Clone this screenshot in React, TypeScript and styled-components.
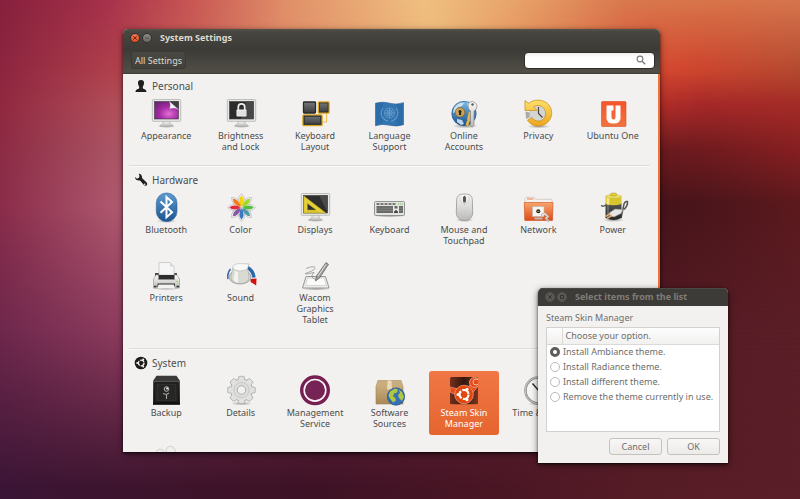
import React from "react";
import styled, { createGlobalStyle, css } from "styled-components";

const GlobalStyle = createGlobalStyle`
  *, *::before, *::after { box-sizing: border-box; }
  html, body { margin: 0; height: 100%; }
  body {
    font-family: "Noto Sans", "Open Sans", sans-serif;
    font-size: 9px;
    line-height: 11px;
    color: #4c4c4c;
    overflow: hidden;
  }
  button, input { font: inherit; color: inherit; margin: 0; }
`;

/* ---------- desktop ---------- */

const Desktop = styled.main`
  position: relative;
  height: 100vh;
  min-height: 480px;
  overflow: hidden;
  background: linear-gradient(90deg, #3b1536 0%, #3d142c 20%, #3e1225 40%, #4a1624 62%, #561c26 80%, #5a1e28 100%);
`;

const WallpaperBand = styled.div<{ $from: number; $to: number; $stops: string }>`
  position: absolute;
  inset: 0;
  background: linear-gradient(90deg, ${(p) => p.$stops});
  mask-image: linear-gradient(180deg, #000 ${(p) => p.$from}%, transparent ${(p) => p.$to}%);
`;

const bands = [
  { from: 66, to: 98, stops: "#6e284c 0%, #8e3c5e 15%, #7a2c4c 40%, #551b24 84%, #5a1e27 100%" },
  { from: 41, to: 66, stops: "#8a2c4a 0%, #b05a70 15%, #a04048 50%, #46141a 83%, #4c161b 90%, #5c191d 100%" },
  { from: 30, to: 41, stops: "#8c2b44 0%, #ac5666 15%, #c06050 50%, #6c1a1e 83%, #701b1f 88%, #861f21 100%" },
  { from: 21, to: 30, stops: "#902840 0%, #b2505a 15%, #d07050 50%, #b02c28 83%, #a42828 88%, #a42b27 100%" },
  { from: 14, to: 21, stops: "#8c2540 0%, #b2424c 15%, #e08a68 35%, #eeb878 55%, #d6482f 82%, #cc452e 88%, #b44a30 100%" },
  { from: 0, to: 14, stops: "#86203c 0%, #a4304a 13%, #c85654 24%, #e09068 36%, #efbf80 53%, #e8a46a 64%, #d8784e 78%, #d8744a 90%, #d6754e 100%" },
];

/* ---------- windows ---------- */

const Window = styled.section`
  position: absolute;
  display: flex;
  flex-direction: column;
  border-radius: 5px 5px 0 0;
  background: #f2f1f0;
  box-shadow: 0 1px 2px rgba(0, 0, 0, 0.6), 0 2px 7px rgba(0, 0, 0, 0.55);
  overflow: hidden;
`;

const SettingsWindow = styled(Window)`
  top: 29px;
  left: 123px;
  right: 140px;
  bottom: 47px;
`;

const DialogWindow = styled(Window)`
  top: 288px;
  right: 72px;
  width: 190px;
  color: #6e6e6c;
`;

const Header = styled.header`
  flex: none;
  padding-bottom: 1px;
  background: linear-gradient(180deg, #55534b 0, #484640 6%, #3c3b37 45%, #504e46 96%, #3c3b37 100%);
`;

const TitleBar = styled.div<{ $inactive?: boolean }>`
  flex: none;
  display: flex;
  align-items: center;
  gap: 2px;
  height: 18px;
  padding: 0 7px;
  ${(p) => p.$inactive && css`background: #3c3b37; box-shadow: inset 0 1px #4a4944;`}
`;

const Title = styled.h1<{ $inactive?: boolean }>`
  margin: 0 0 0 6px;
  font-size: 9px;
  line-height: 12px;
  font-weight: 700;
  color: ${(p) => (p.$inactive ? "#807d78" : "#dfdbd2")};
`;

const WindowButton = styled.button<{ $kind: "close" | "plain" | "inactive" }>`
  display: grid;
  place-items: center;
  width: 10px;
  height: 10px;
  padding: 0;
  border: 1px solid ${(p) => (p.$kind === "inactive" ? "#55534e" : "#34332f")};
  border-radius: 50%;
  color: ${(p) => (p.$kind === "inactive" ? "#33322e" : "#6a2a14")};
  background: ${(p) =>
    p.$kind === "close" ? "linear-gradient(#f37450, #e2501f)" : p.$kind === "plain" ? "linear-gradient(#8c8a83, #6a6862)" : "#5a5853"};
  svg { display: block; width: 8px; height: 8px; }
`;

const Toolbar = styled.div`
  display: flex;
  align-items: center;
  justify-content: space-between;
  height: 26px;
  padding: 0 5px 0 8px;
`;

const AllSettings = styled.button`
  height: 18px;
  padding: 0 3px;
  border: 1px solid #3a3934;
  border-radius: 3px;
  background: linear-gradient(#4b4942, #42413b);
  color: #dfdbd2;
`;

const SearchBox = styled.label`
  display: flex;
  align-items: center;
  width: 131px;
  height: 17px;
  padding: 0 8px 0 5px;
  border: 1px solid #2f2e2b;
  border-radius: 4px;
  background: linear-gradient(#f0efee, #fff 30%);
  svg { flex: none; width: 10px; height: 10px; }
`;

const SearchInput = styled.input`
  flex: 1;
  min-width: 0;
  padding: 0;
  border: 0;
  outline: 0;
  background: transparent;
`;

const Body = styled.div`
  flex: 1;
  min-height: 0;
  overflow: hidden;
  padding: 0 8px 0 6px;
  border-right: 2px solid #f2713a;
`;

const Section = styled.section<{ $roomy?: boolean }>`
  padding: 7px 0 ${(p) => (p.$roomy ? 17 : 7)}px;
  &:first-child { padding-top: 5px; }
  & + & { border-top: 1px solid #dddbd9; box-shadow: inset 0 1px #fafafa; }
`;

const SectionTitle = styled.h2`
  display: flex;
  align-items: center;
  gap: 4px;
  margin: 0 0 1px;
  padding-left: 5px;
  height: 14px;
  font-size: 10px;
  line-height: 14px;
  font-weight: 400;
  svg { width: 14px; height: 14px; }
`;

const Grid = styled.div`
  display: grid;
  grid-template-columns: repeat(7, 1fr);
  row-gap: 4px;
  align-items: start;
`;

const Tile = styled.button<{ $selected?: boolean }>`
  display: flex;
  flex-direction: column;
  align-items: center;
  gap: 1px;
  margin: 0 2px;
  padding: 3px 0 6px;
  min-height: 64px;
  border: 0;
  border-radius: 3px;
  background: ${(p) => (p.$selected ? "linear-gradient(#f07746, #e5652f)" : "transparent")};
  color: ${(p) => (p.$selected ? "#fff" : "inherit")};
  svg { flex: none; width: 32px; height: 32px; }
`;

const TileLabel = styled.span`
  line-height: 11px;
  white-space: pre;
  text-align: center;
`;

/* ---------- dialog ---------- */

const DialogBody = styled.form`
  display: flex;
  flex-direction: column;
  padding: 6px 8px 8px;
`;

const DialogText = styled.p`
  margin: 0 0 3px;
  line-height: 12px;
`;

const ListFrame = styled.div`
  min-height: 105px;
  border: 1px solid #d3d1cf;
  background: #fff;
`;

const OptionTable = styled.table`
  width: 100%;
  border-collapse: collapse;
  th {
    height: 16px;
    padding: 0 3px;
    font-weight: 400;
    text-align: left;
    background: linear-gradient(#fdfdfd, #f1f0ef);
    border-bottom: 1px solid #dcdad8;
  }
  th:first-child { width: 15px; padding: 0; border-right: 1px solid #dcdad8; }
  td { height: 15px; padding: 0; line-height: 14px; white-space: nowrap; }
  td:first-child { text-align: center; }
  td + td { padding-left: 1px; }
  td label { display: block; }
`;

const Radio = styled.input`
  appearance: none;
  display: block;
  width: 10px;
  height: 10px;
  margin: 0 auto;
  border: 1px solid #bdbbb9;
  border-radius: 50%;
  background: #fff;
  &:checked { border: 3px solid #5d5d5b; }
`;

const Actions = styled.div`
  display: flex;
  justify-content: flex-end;
  gap: 5px;
  margin-top: 6px;
`;

const ActionButton = styled.button`
  width: 53px;
  height: 17px;
  padding: 0;
  border: 1px solid #c4c1be;
  border-radius: 3px;
  background: linear-gradient(#f8f7f6, #ecebe9);
`;

/* ---------- icons ---------- */

const Svg = ({ children, size = 32 }: { children: React.ReactNode; size?: number }) => (
  <svg viewBox={`0 0 ${size} ${size}`} fill="none" aria-hidden="true">{children}</svg>
);

const Gradients = styled.svg`
  position: absolute;
  width: 0;
  height: 0;
`;

const gradientList: [string, string, string][] = [
  ["metal", "#fafafa", "#b9b9b7"],
  ["dark", "#555", "#242424"],
  ["key", "#777a7c", "#37393b"],
  ["blue", "#5c9bd0", "#1c558f"],
  ["gold", "#ffe06a", "#eba51d"],
  ["folder", "#f7a56c", "#de4c16"],
  ["box", "#d3b88b", "#a98855"],
  ["one", "#f5552a", "#f0743f"],
  ["globe", "#7fbbe6", "#164f8e"],
];

const GradientDefs = () => (
  <Gradients aria-hidden="true">
    <defs>
      {gradientList.map(([id, a, b]) => (
        <linearGradient key={id} id={id} x1="0" y1="0" x2="0" y2="1">
          <stop stopColor={a} /><stop offset="1" stopColor={b} />
        </linearGradient>
      ))}
      <radialGradient id="purple" cx=".6" cy=".7" r=".8">
        <stop stopColor="#e270d4" /><stop offset=".5" stopColor="#a52ba5" /><stop offset="1" stopColor="#6c2374" />
      </radialGradient>
      <radialGradient id="shade"><stop stopColor="#000" stopOpacity=".35" /><stop offset="1" stopColor="#000" stopOpacity="0" /></radialGradient>
    </defs>
  </Gradients>
);

const Monitor = ({ screen, children }: { screen: string; children?: React.ReactNode }) => (
  <Svg>
    <ellipse cx="16.5" cy="29" rx="9" ry="2" fill="url(#shade)" />
    <path d="M13 24h7v3l3 1.5v.8H10v-.8l3-1.5z" fill="url(#metal)" stroke="#9b9b99" strokeWidth=".5" />
    <rect x="2.3" y="2.5" width="28.4" height="21.8" rx="1" fill="#e9e9e8" stroke="#aaa" strokeWidth=".7" />
    <rect x="4.5" y="4.5" width="24" height="17.5" fill={screen} stroke="#3b3b3b" strokeWidth=".6" />
    {children}
  </Svg>
);

const AppearanceIcon = () => (
  <Monitor screen="url(#purple)">
    <path d="M19.500 4.500h9v8z" fill="#3f3f3f" />
    <path d="M19.500 4.500q1.500 4 .3 7.200 4-1.500 8.700.8z" fill="#f4f4f4" stroke="#bbb" strokeWidth=".3" />
  </Monitor>
);
const BrightnessIcon = () => (
  <Monitor screen="#2c2c2c">
    <path d="M21 4.500h7.500V22H16z" fill="#484848" />
    <path d="M13.300 13v-3a3.200 3.200 0 0 1 6.400 0v3" stroke="#eee" strokeWidth="1.7" />
    <rect x="11.5" y="12.5" width="10" height="7" rx=".8" fill="#ededed" />
    <path d="M11.500 15h10M11.500 17.200h10" stroke="#c8c8c8" strokeWidth=".6" />
  </Monitor>
);
const LayoutIcon = () => (
  <Svg>
    <path d="M23 25h4.500v-9" stroke="#eec05c" strokeWidth="1.2" />
    <rect x="4.5" y="5" width="12" height="11" rx=".8" fill="url(#key)" stroke="#292929" strokeWidth="1.3" />
    <rect x="19.5" y="5" width="10.5" height="11" rx=".8" fill="url(#key)" stroke="#dba520" strokeWidth="1.5" />
    <rect x="20.5" y="6" width="8.5" height="9" fill="none" stroke="#2d2d2d" strokeWidth=".8" />
    <rect x="4" y="18" width="19" height="10.5" rx=".8" fill="url(#key)" stroke="#dba520" strokeWidth="1.5" />
    <rect x="5.2" y="19.2" width="16.6" height="8" fill="none" stroke="#2d2d2d" strokeWidth="1.1" />
  </Svg>
);
const LanguageIcon = () => (
  <Svg>
    <path d="M2.500 6.200q7-2 14 0t14-.5v22q-7 2.300-14 .5t-14 .5z" fill="#2c6ca8" stroke="#235c93" strokeWidth=".6" />
    <path d="M10 5.200q3.500 0 6.500 1t7 .8v21q-3.500.8-7 0t-6.500-.6z" fill="#3c7eb9" opacity=".5" />
    <g stroke="#8eb9dc" strokeWidth=".6" opacity=".75">
      <circle cx="16.500" cy="16" r="5" /><circle cx="16.500" cy="16" r="2.7" />
      <path d="M11.500 16h10M16.500 11v10M13 12.500l7 7M20 12.500l-7 7" />
      <path d="M10 11c-4 5-1 12 5 13M23 11c4 5 1 12-5 13" strokeWidth="1.1" strokeDasharray="1.5 .5" />
    </g>
  </Svg>
);
const AccountsIcon = () => (
  <Svg>
    <ellipse cx="17" cy="29" rx="13" ry="2.5" fill="url(#shade)" />
    <circle cx="16" cy="16.5" r="12.2" fill="url(#globe)" stroke="#1e4f85" strokeWidth=".6" />
    <path d="M6 11c3-5 8-6 10-5l-2 3-5 2-1 4-3 1zM19 6l5 2 1 3-5-1zM9 22l5 1 2 4-3 1-4-3zM21 17l5 1-1 5-4 2z" fill="#dcebf5" opacity=".85" />
    <circle cx="12" cy="15.3" r="4.8" fill="#c9a55a" stroke="#77602c" strokeWidth=".7" />
    <circle cx="12" cy="14.5" r="1.5" fill="#2a2415" /><path d="M11.300 15h1.500l.5 3h-2.500z" fill="#2a2415" />
    <path d="M21 14l2 1-2.500 14-3-.5 1-4 .8-1-.3-2z" fill="#e4bb5b" stroke="#8c6a2a" strokeWidth=".4" />
    <path d="M21 5.500q3.500-2.500 6.500.5t.5 6.500l-2 1.500v14.500l-2 1.500-1.500-1V14q-4-3-1.500-8.500z" fill="url(#metal)" stroke="#777" strokeWidth=".6" />
    <circle cx="24.500" cy="7.5" r="1.2" fill="#555" />
  </Svg>
);
const PrivacyIcon = () => (
  <Svg>
    <ellipse cx="17" cy="29.5" rx="12" ry="1.8" fill="url(#shade)" />
    <circle cx="16.5" cy="16.5" r="9" fill="#d5d5d3" stroke="#aaa" strokeWidth=".5" />
    <path d="M16.500 10v6.500l4 4" stroke="#444" strokeWidth="1.2" />
    <path d="M3 3.500l3.500 2.800C14 .5 25 3 28.500 10.500c4 9-2.500 18.500-12 18.500-5 0-9-2-11-6l4.500-2.500c3 5 10 4.500 12.500 0 3-5.500-.5-11.500-6-12-2-.2-3.500.3-4.800 1.400L15 13.500H3z" fill="url(#gold)" stroke="#c58b1b" strokeWidth=".7" />
    <path d="M3.500 14.500l4 1v5l-3.500 1.500z" fill="#aaa" />
  </Svg>
);
const UbuntuOneIcon = () => (
  <Svg>
    <rect x="4.5" y="4.5" width="24.5" height="25" rx="1" fill="url(#one)" stroke="#dc4d23" strokeWidth=".6" />
    <path d="M9.500 8.500h5v12q0 2 2 2t2-2v-12h5V21q0 5.500-7 5.500T9.500 21z" fill="#fff" />
    <path d="M14 8.500h2.500v5H14z" fill="#fff" />
  </Svg>
);
const BluetoothIcon = () => (
  <Svg>
    <ellipse cx="16.5" cy="30" rx="10" ry="2" fill="url(#shade)" />
    <rect x="6.3" y="2" width="20.7" height="28.5" rx="10" fill="url(#blue)" stroke="#2d6298" strokeWidth=".6" />
    <path d="M10.500 10.500l11.500 10.700-5.500 5V6l5.500 5-11.500 10.700" stroke="#fff" strokeWidth="2" />
  </Svg>
);
const petals = ["#f5d414", "#9ed92b", "#53be3b", "#4a9aab", "#3a78c4", "#8855a5", "#e32b3d", "#f47a1e"];
const ColorIcon = () => (
  <Svg>
    {petals.map((c, i) => (
      <path key={c} transform={`rotate(${i * 45} 16.5 16.5)`} d="M16.500 16.500Q10.500 8 16.500 2.500 22.500 8 16.500 16.500z" fill="#f7f7f7" stroke="#c7c7c7" strokeWidth="1" />
    ))}
    {petals.map((c, i) => (
      <path key={c} transform={`rotate(${i * 45} 16.5 16.5)`} d="M16.500 16.500Q12.300 8.500 16.500 4.200 20.700 8.500 16.500 16.500z" fill={c} />
    ))}
    <circle cx="16.5" cy="16.5" r="2" fill="#fff" opacity=".45" />
  </Svg>
);
const DisplaysIcon = () => (
  <Monitor screen="#2e2e2e">
    <path d="M20 4.500h8.500V21z" fill="#4b4b4b" />
    <path d="M4.700 4.800L27 22H4.700zM8.500 12.500V19H17z" fill="#e6cf36" stroke="#9a8a1a" strokeWidth=".5" fillRule="evenodd" />
    <path d="M9 21.500v-1M12 21.500v-1M15 21.500v-1M18 21.500v-1" stroke="#75691a" strokeWidth=".5" />
  </Monitor>
);
const KeyboardIcon = () => (
  <Svg>
    <ellipse cx="16.5" cy="25" rx="15.5" ry="1.5" fill="url(#shade)" />
    <rect x="1.5" y="10.5" width="30" height="14" rx="1" fill="#e4e4e2" stroke="#888a85" strokeWidth=".9" />
    <path d="M3.500 13h20" stroke="#555753" strokeWidth="1.3" strokeDasharray="3 1" /><path d="M25 13h5" stroke="#60b336" strokeWidth="1.2" strokeDasharray="1 .8" />
    <path d="M3.500 15h16.500v7H3.500zM21.500 15h3v2.500h-3zM26 15h4v7h-4z" fill="#686a67" />
    <path d="M3.500 17.200h16.500M3.500 19.500h16.500M26 17.200h4M26 19.500h4" stroke="#a4a6a2" strokeWidth=".4" />
    <path d="M22.300 19h1.500v1.300H25V22h-4v-1.700h1.300z" fill="#444" />
  </Svg>
);
const MouseIcon = () => (
  <Svg>
    <ellipse cx="16.5" cy="29" rx="9" ry="2" fill="url(#shade)" />
    <path d="M16.500 3C22 3 24 4.500 24.300 9l.4 12c0 5.500-3.200 8.500-8.200 8.500S8.300 26.500 8.300 21l.4-12C9 4.500 11 3 16.500 3z" fill="url(#metal)" stroke="#969694" strokeWidth=".8" />
    <path d="M16.500 3.500v11M12 4.500v6q4.500 5 9 0v-6" stroke="#c6c6c4" strokeWidth=".6" />
    <rect x="15" y="5" width="3" height="6.5" rx="1.5" fill="#55585a" />
  </Svg>
);
const NetworkIcon = () => (
  <Svg>
    <path d="M3 28V7.500l1-1.200h8l1.500 2H30V28z" fill="#f4f1ef" stroke="#c9b6aa" strokeWidth=".6" />
    <path d="M5 8h6.500" stroke="#ef8148" />
    <path d="M2.300 11.500h28.700l-.5 18H2.800z" fill="url(#folder)" stroke="#cf4e1b" strokeWidth=".6" />
    <rect x="10.5" y="15.5" width="11.5" height="10" fill="#f5f4f0" stroke="#bdb7b0" strokeWidth=".6" />
    <circle cx="16.3" cy="20.3" r="2" fill="#1a1a1a" /><path d="M15 20.300h2.600" stroke="#e8bd3d" strokeWidth=".8" />
    <path d="M12.500 27.500h8M19 24l4-1.500 3 3-2 2 3 3" stroke="#b9b9b9" strokeWidth="2" /><path d="M20 24l3-1 2.500 2.500-2 2" stroke="#f4f4f4" strokeWidth=".9" />
  </Svg>
);
const PowerIcon = () => (
  <Svg>
    <ellipse cx="16.5" cy="29" rx="11" ry="2" fill="url(#shade)" />
    <path d="M9 14q-3 2-5 .5M24 27l3-14q1-3 3.500-2.500.5 4-3.500 8" stroke="#555753" strokeWidth="1.5" />
    <path d="M8.500 12h16v15q-8 4-16 0z" fill="url(#dark)" /><path d="M11 13v14" stroke="#8a8a8a" strokeWidth="1.5" opacity=".7" />
    <path d="M8.500 5.500q8-3 16 0V13q-8 2.500-16 0z" fill="#d9c52f" /><path d="M11 6v7.500" stroke="#fbf3a0" strokeWidth="2.5" opacity=".8" />
    <ellipse cx="16.5" cy="5.5" rx="8" ry="1.8" fill="#ece069" stroke="#b8a51e" strokeWidth=".4" />
    <ellipse cx="16.5" cy="3.5" rx="3.5" ry="1.6" fill="#e1ce3c" stroke="#a3921a" strokeWidth=".5" />
    <path d="M12 22l6-4 8 .5-2 4-7 3.500-4-1z" fill="#e6e6e4" stroke="#8c8c8a" strokeWidth=".6" />
    <path d="M13.500 22.500l-5 3M15 24.500l-5 3" stroke="#d9a86c" strokeWidth="1.5" />
  </Svg>
);
const PrinterIcon = () => (
  <Svg>
    <ellipse cx="16" cy="29.5" rx="14" ry="1.7" fill="url(#shade)" />
    <path d="M5 14h22v7H5z" fill="#4a4a4a" />
    <path d="M9 16V3.500h11l4 4V16z" fill="#f6f6f6" stroke="#b5b5b3" strokeWidth=".6" /><path d="M20 3.500v4h4z" fill="#d5d5d3" />
    <path d="M8 16h17v5H8z" fill="#2e2e2e" />
    <path d="M3.500 20L6 16h2.500v4.500h16V16H27l2.500 4v9h-26z" fill="url(#metal)" stroke="#8f8f8d" strokeWidth=".6" />
    <path d="M7.500 24.500h17.500v3.500H7.500z" fill="#2c2c2c" /><path d="M8.500 25.500h15.500l1 4H7.500z" fill="#f3f3f3" /><path d="M4 27.500h2.500M26.500 27.500H29" stroke="#333" strokeWidth="1.6" />
    <circle cx="27" cy="22.5" r=".8" fill="#8bd63c" />
  </Svg>
);
const SoundIcon = () => (
  <Svg>
    <path d="M3 20A12.500 12.500 0 0 1 5.500 10" stroke="#3165a4" strokeWidth="1.5" />
    <path d="M22.500 8.500q5.500 3 6.500 10" stroke="#2c67ab" strokeWidth="3.5" />
    <path d="M25.500 20l6-.5-.3 7-5.500-3.500z" fill="#d40f0f" />
    <ellipse cx="15" cy="18" rx="11" ry="7" fill="#d6d7d3" stroke="#8b8d88" strokeWidth=".7" />
    <path d="M8 8l-2 10q.5 6.500 9 6.500t9-6.500l-1.500-9 1-4z" fill="#d9dad4" stroke="#a0a29d" strokeWidth=".5" />
    <path d="M10 12l-1.500 9q2 2.500 4.500 3V13z" fill="#f3f3f0" />
    <path d="M7.500 8.500q1-4 8-4l8.500.5-1.500 4.500Q20 12 15 12T7.500 8.500z" fill="#f8f8f7" stroke="#a8aaa5" strokeWidth=".5" />
  </Svg>
);
const WacomIcon = () => (
  <Svg>
    <ellipse cx="17" cy="30" rx="14" ry="1.5" fill="url(#shade)" />
    <path d="M7 17.500h19.500L30 29H3.500z" fill="#eeeeec" stroke="#8d8d8b" strokeWidth=".9" />
    <path d="M8.500 19h16.700l2.200 7.500H6.300z" fill="#fafafa" stroke="#bbb" strokeWidth=".5" />
    <path d="M7 9.500q8-3 9-1t-7 5 6 0q-5 5 2 7" stroke="#888" strokeWidth=".7" />
    <path d="M27 3.500l2.500 1.800L20.500 19l-4 3 1-5z" fill="#9b9d99" stroke="#5e5e5c" strokeWidth=".7" /><path d="M27 5.500l-8 11.500" stroke="#eee" strokeWidth=".9" />
  </Svg>
);
const BackupIcon = () => (
  <Svg>
    <path d="M6.500 1.800h20L30 7v23.500H3V7z" fill="#3a3a38" /><path d="M3 7h27v23.500H3z" fill="url(#dark)" />
    <rect x="4.7" y="8.7" width="23.5" height="19.5" fill="#262624" stroke="#0e0e0e" strokeWidth=".8" />
    <rect x="7.5" y="10.5" width="18" height="16" stroke="#343432" strokeWidth=".6" />
    <circle cx="16.5" cy="15" r="2.3" stroke="#bdbdbd" strokeWidth="1" /><circle cx="17" cy="14.5" r="1" fill="#fff" />
    <path d="M13 19.500l3.500 1 2.500-1.500M16.500 20.500V25" stroke="#a8a8a8" strokeWidth="1.1" />
    <path d="M3 29.500h27" stroke="#111" strokeWidth="2" />
  </Svg>
);
const DetailsIcon = () => (
  <Svg>
    <ellipse cx="16.5" cy="29.5" rx="11" ry="2" fill="url(#shade)" />
    <circle cx="16.5" cy="16" r="11" fill="#d9d9d8" stroke="#a9a9a7" strokeWidth=".8" />
    {petals.map((c, i) => (
      <path key={c} transform={`rotate(${i * 45} 16.5 16)`} d="M13 6.300l1-4h5l1 4" fill="#e2e2e1" stroke="#a9a9a7" strokeWidth=".8" />
    ))}
    <circle cx="16.5" cy="16" r="10.3" fill="#dfdfde" />
    <circle cx="16.5" cy="16" r="7.5" stroke="#c2c2c0" strokeWidth=".8" />
    <circle cx="16.5" cy="16" r="4.3" fill="#f2f1f0" stroke="#aaaaa8" strokeWidth="1" />
  </Svg>
);
const ManagementIcon = () => (
  <Svg>
    <circle cx="16" cy="16.3" r="15" fill="#761f50" />
    <circle cx="16" cy="16.3" r="10.8" fill="#762455" stroke="#fbf4f8" strokeWidth="1.6" />
  </Svg>
);
const SoftwareIcon = () => (
  <Svg>
    <path d="M5 6.500h23l2 6v17.500H3V12.500z" fill="url(#box)" stroke="#9b8056" strokeWidth=".6" />
    <path d="M5 6.500h23l2 6H3z" fill="#c9ad7e" /><path d="M14.500 6.500h4l.5 9h-5z" fill="#e9d9b7" />
    <circle cx="23" cy="22.5" r="8.7" fill="#3570b5" stroke="#23538d" strokeWidth=".7" />
    <path d="M17 17.500l5-3 3 1-1 3-3 1-1 3 2 1 1 3-3 2-3-4-1.500-3zM26 16l3 2 2 5-2 4-3-3-1-3 2-2z" fill="#b0c83f" />
  </Svg>
);
const SteamIcon = () => (
  <Svg>
    <defs>
      <clipPath id="skin"><rect x="2" y="3" width="28" height="27.5" rx="1.5" /></clipPath>
      <linearGradient id="skinBg" x1="0" y1="0" x2="1" y2="0"><stop stopColor="#74301c" /><stop offset=".5" stopColor="#35170f" /><stop offset="1" stopColor="#7a3520" /></linearGradient>
    </defs>
    <g clipPath="url(#skin)">
      <rect x="2" y="3" width="28" height="27.5" fill="url(#skinBg)" />
      <path d="M2 13l12 3-1 7-11-5zM20 13l6-6 4 5-7 9z" fill="#e34c1c" stroke="#f4906c" strokeWidth=".8" />
      <circle cx="26.5" cy="8.5" r="5" fill="#e34c1c" stroke="#f0a386" strokeWidth=".9" /><circle cx="28" cy="8" r="3" stroke="#f3b9a3" />
    </g>
    <circle cx="16" cy="20.5" r="9.3" fill="#e2470f" stroke="#f39a78" strokeWidth=".8" />
    <circle cx="16" cy="20.5" r="4.5" stroke="#fff" strokeWidth="2.2" strokeDasharray="8 1.42" />
    <circle cx="10" cy="20.5" r="1.5" fill="#fff" /><circle cx="19" cy="15.2" r="1.5" fill="#fff" /><circle cx="19" cy="25.8" r="1.5" fill="#fff" />
  </Svg>
);
const ClockIcon = () => (
  <Svg>
    <ellipse cx="16.5" cy="30" rx="11" ry="1.5" fill="url(#shade)" />
    <circle cx="16.5" cy="16.5" r="13" fill="#f6f6f5" stroke="#8d8f8b" strokeWidth="2.5" />
    <circle cx="16.5" cy="16.5" r="13.3" stroke="#dadad8" strokeWidth=".8" />
    <path d="M10.500 9.500l6 7 6-2" stroke="#2e2e2e" strokeWidth="1.5" />
  </Svg>
);
const UsersIcon = () => (
  <Svg>
    <circle cx="20.5" cy="9" r="4.7" fill="#efefee" stroke="#c8c8c6" strokeWidth=".8" />
    <circle cx="10" cy="10.5" r="3.5" fill="#efefee" stroke="#c8c8c6" strokeWidth=".8" />
    <path d="M3 26q0-11 7-11t6 3q8-4 12 8z" fill="#e6e6e5" stroke="#bdbdbb" strokeWidth=".8" />
  </Svg>
);
const PersonGlyph = () => (
  <Svg size={14}><path d="M7 1c2.500 0 3.300 1.600 3 3.600-.2 1.700-.9 2.500-1.200 3.200v1.400c.2.800 3.700.8 3.700 3.800h-11c0-3 3.500-3 3.700-3.800V7.800C4.900 7.100 4.200 6.300 4 4.600 3.700 2.600 4.500 1 7 1z" fill="#1f1f1f" /></Svg>
);
const WrenchGlyph = () => (
  <Svg size={14}><path d="M4.700.8c2.300.2 3.700 2 3.300 4.300l4.600 4.400c1.700 1.800-.4 4.300-2.400 2.800L6 7.500C3.500 8 1 6.600.9 4L3 5.700l2-.9.500-1.800zm6 9.700a.8.800 0 1 0 .1 1.600.8.800 0 0 0-.1-1.600z" fill="#1f1f1f" fillRule="evenodd" /></Svg>
);
const SystemGlyph = () => (
  <Svg size={14}>
    <circle cx="7" cy="7" r="6.3" fill="#1b1b1b" />
    <circle cx="7.2" cy="7" r="2.8" stroke="#f2f1f0" strokeWidth="1.3" strokeDasharray="4.9 .96" />
    <circle cx="3.2" cy="7" r="1" fill="#f2f1f0" /><circle cx="9.2" cy="3.6" r="1" fill="#f2f1f0" /><circle cx="9.2" cy="10.4" r="1" fill="#f2f1f0" />
  </Svg>
);

/* ---------- content ---------- */

type Item = { label: string; icon: React.FC; selected?: boolean; iconOnly?: boolean };
type Group = { title: string; glyph: React.FC; roomy?: boolean; items: Item[] };

const groups: Group[] = [
  {
    title: "Personal", glyph: PersonGlyph,
    items: [
      { label: "Appearance", icon: AppearanceIcon },
      { label: "Brightness\nand Lock", icon: BrightnessIcon },
      { label: "Keyboard\nLayout", icon: LayoutIcon },
      { label: "Language\nSupport", icon: LanguageIcon },
      { label: "Online\nAccounts", icon: AccountsIcon },
      { label: "Privacy", icon: PrivacyIcon },
      { label: "Ubuntu One", icon: UbuntuOneIcon },
    ],
  },
  {
    title: "Hardware", glyph: WrenchGlyph, roomy: true,
    items: [
      { label: "Bluetooth", icon: BluetoothIcon },
      { label: "Color", icon: ColorIcon },
      { label: "Displays", icon: DisplaysIcon },
      { label: "Keyboard", icon: KeyboardIcon },
      { label: "Mouse and\nTouchpad", icon: MouseIcon },
      { label: "Network", icon: NetworkIcon },
      { label: "Power", icon: PowerIcon },
      { label: "Printers", icon: PrinterIcon },
      { label: "Sound", icon: SoundIcon },
      { label: "Wacom\nGraphics\nTablet", icon: WacomIcon },
    ],
  },
  {
    title: "System", glyph: SystemGlyph,
    items: [
      { label: "Backup", icon: BackupIcon },
      { label: "Details", icon: DetailsIcon },
      { label: "Management\nService", icon: ManagementIcon },
      { label: "Software\nSources", icon: SoftwareIcon },
      { label: "Steam Skin\nManager", icon: SteamIcon, selected: true },
      { label: "Time & Date", icon: ClockIcon },
      { label: "Universal Access", icon: DetailsIcon, iconOnly: true },
      { label: "User Accounts", icon: UsersIcon, iconOnly: true },
    ],
  },
];

const options = [
  "Install Ambiance theme.",
  "Install Radiance theme.",
  "Install different theme.",
  "Remove the theme currently in use.",
];

export default function App() {
  return (
    <>
      <GlobalStyle />
      <GradientDefs />
      <Desktop>
        {bands.map((b) => (
          <WallpaperBand key={b.from} $from={b.from} $to={b.to} $stops={b.stops} />
        ))}

        <SettingsWindow aria-label="System Settings">
          <Header>
            <TitleBar>
              <WindowButton $kind="close" aria-label="Close">
                <svg viewBox="0 0 8 8" stroke="currentColor"><path d="M2.300 2.300l3.400 3.400M5.700 2.300L2.300 5.700" /></svg>
              </WindowButton>
              <WindowButton $kind="plain" aria-label="Minimize">
                <svg viewBox="0 0 8 8" stroke="#55534d"><path d="M2 4h4" /></svg>
              </WindowButton>
              <Title>System Settings</Title>
            </TitleBar>
            <Toolbar>
              <AllSettings>All Settings</AllSettings>
              <SearchBox>
                <SearchInput type="search" aria-label="Search settings" />
                <svg viewBox="0 0 10 10" fill="none" stroke="#7a7a7a" strokeWidth="1.1">
                  <circle cx="4" cy="4" r="2.9" /><path d="M6.200 6.200l3 3" strokeWidth="1.4" />
                </svg>
              </SearchBox>
            </Toolbar>
          </Header>
          <Body>
            {groups.map(({ title, glyph: Glyph, roomy, items }) => (
              <Section key={title} $roomy={roomy}>
                <SectionTitle><Glyph />{title}</SectionTitle>
                <Grid>
                  {items.map(({ label, icon: Icon, selected, iconOnly }) => (
                    <Tile key={label} $selected={selected} aria-label={iconOnly ? label : undefined}>
                      <Icon />
                      {!iconOnly && <TileLabel>{label}</TileLabel>}
                    </Tile>
                  ))}
                </Grid>
              </Section>
            ))}
          </Body>
        </SettingsWindow>

        <DialogWindow role="dialog" aria-label="Select items from the list">
          <TitleBar $inactive>
            <WindowButton $kind="inactive" aria-label="Close dialog">
              <svg viewBox="0 0 8 8" stroke="currentColor"><path d="M2.300 2.300l3.400 3.400M5.700 2.300L2.300 5.700" /></svg>
            </WindowButton>
            <WindowButton $kind="inactive" aria-label="Maximize dialog">
              <svg viewBox="0 0 8 8" fill="none" stroke="currentColor"><path d="M2.500 2.500h3v3h-3z" /></svg>
            </WindowButton>
            <Title $inactive>Select items from the list</Title>
          </TitleBar>
          <DialogBody onSubmit={(e) => e.preventDefault()}>
            <DialogText>Steam Skin Manager</DialogText>
            <ListFrame>
              <OptionTable>
                <thead>
                  <tr><th aria-label="Selected" /><th>Choose your option.</th></tr>
                </thead>
                <tbody>
                  {options.map((text, i) => (
                    <tr key={text}>
                      <td><Radio type="radio" name="theme" id={`theme-${i}`} defaultChecked={i === 0} /></td>
                      <td><label htmlFor={`theme-${i}`}>{text}</label></td>
                    </tr>
                  ))}
                </tbody>
              </OptionTable>
            </ListFrame>
            <Actions>
              <ActionButton type="button">Cancel</ActionButton>
              <ActionButton type="submit">OK</ActionButton>
            </Actions>
          </DialogBody>
        </DialogWindow>
      </Desktop>
    </>
  );
}
